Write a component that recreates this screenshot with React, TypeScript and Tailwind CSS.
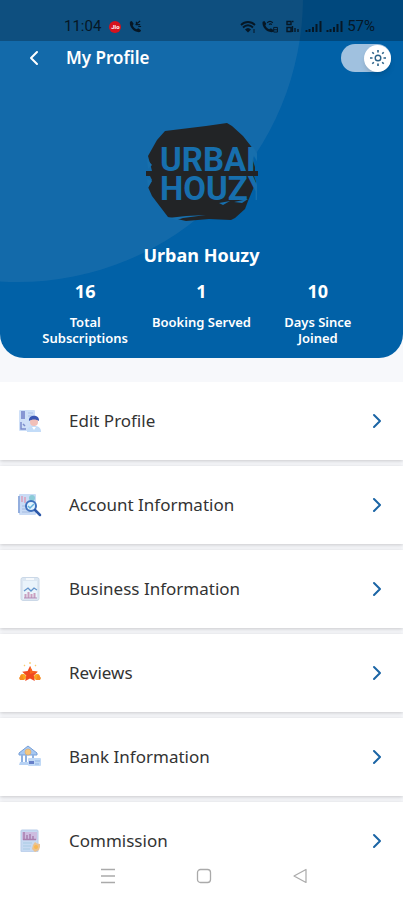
import { useState } from "react";
import type { ReactNode } from "react";
import { ChevronLeft, ChevronRight } from "lucide-react";

const stats = [
  { value: "16", label: "Total Subscriptions" },
  { value: "1", label: "Booking Served" },
  { value: "10", label: "Days Since Joined" },
];

function EditProfileIcon() {
  return (
    <svg viewBox="0 0 24 24" className="size-6" aria-hidden="true">
      <rect x="1" y="1" width="16" height="21" rx="1" fill="#cfe0f8" />
      <rect x="3" y="2" width="4" height="8" fill="#8796d3" />
      <path d="M10 4h5M10 7h4" stroke="#a9bfe8" strokeWidth="1.2" />
      <path d="M3 13v7h5M5 15l2 2" stroke="#7c8ccb" strokeWidth="1.5" fill="none" />
      <path d="M9 23c0-5 3-6 7-6s7 1 7 6z" fill="#c3dcf8" />
      <circle cx="16" cy="13" r="4" fill="#f1bfb8" />
      <path d="M11 12c-1-7 11-7 10 0-3-2-7-2-10 0z" fill="#3c58b4" />
      <path d="M14 18l2 3 2-3" fill="#fff" />
    </svg>
  );
}

function AccountIcon() {
  return (
    <svg viewBox="0 0 24 24" className="size-6" aria-hidden="true">
      <rect x="1" y="1" width="17" height="21" rx="1" fill="#c9dbf5" />
      <path d="M1 3v17" stroke="#93aede" strokeWidth="2" />
      <path d="M4 3v6M7 4v6" stroke="#dc9fb9" strokeWidth="1.5" />
      <circle cx="14" cy="5" r="3" fill="#8bcbd8" />
      <path d="M4 13h4M4 16h5M4 19h8" stroke="#a5badf" strokeWidth="1" />
      <circle cx="13" cy="13" r="5" fill="#e2f4ff" stroke="#3d70bd" strokeWidth="2" />
      <path d="M10 13l2 2 4-4" stroke="#65b0dc" strokeWidth="1.5" fill="none" />
      <path d="M17 17l5 5" stroke="#2c58a9" strokeWidth="2.5" strokeLinecap="round" />
    </svg>
  );
}

function BusinessIcon() {
  return (
    <svg viewBox="0 0 24 24" className="size-6" aria-hidden="true">
      <rect x="3" y="0.5" width="18" height="23" rx="2" fill="#dce7f2" stroke="#cbd8e7" />
      <rect x="5" y="4" width="14" height="18" fill="#e9f3fb" />
      <path d="M8 2h8" stroke="#fff" strokeWidth="1.5" />
      <path d="M6 14l4-3 3 3 3-3 3 2" stroke="#6495cc" strokeWidth="1.3" fill="none" />
      <path d="M7.5 21v-4M10.500 21v-6M13.500 21v-4M16.500 21v-5" stroke="#c99fbf" strokeWidth="2" />
      <path d="M6 21h13" stroke="#ae88b5" />
    </svg>
  );
}

function ReviewsIcon() {
  return (
    <svg viewBox="0 0 24 24" className="size-6" aria-hidden="true">
      <circle cx="5" cy="16" r="3" fill="#fba51d" />
      <circle cx="19" cy="16" r="3" fill="#fba51d" />
      <path d="M1 17l3-4 2 6H2zM23 17l-3-4-2 6h4z" fill="#f68b20" />
      <path d="M12 5l2.400 5 5.400.8-4 3.800 1 5.400-4.800-2.500L7.200 20l1-5.400-4-3.800 5.400-.8z" fill="#f1491f" />
      <path d="M12 5l2.400 5 5.400.8-7.800 2.200z" fill="#f9661f" />
      <path d="M12 1v2M6 4l1 1M18 4l-1 1" stroke="#f7cf70" strokeWidth="1.3" />
    </svg>
  );
}

function BankIcon() {
  return (
    <svg viewBox="0 0 24 24" className="size-6" aria-hidden="true">
      <path d="M1 8l9-7 9 7v2H1z" fill="#a6c8f2" stroke="#779fd7" />
      <path d="M4 10v7M8 10v7M15 10v5" stroke="#8fb1e1" strokeWidth="2" />
      <path d="M2 17h9v3H1z" fill="#b7d2f4" />
      <circle cx="10" cy="7" r="3" fill="#f4c880" stroke="#d9a86c" strokeWidth="0.600" />
      <rect x="10" y="13" width="13" height="8" rx="1" fill="#c0d9f6" />
      <path d="M11 16h5v3h-5z" fill="#667fc8" />
      <path d="M17 16h5M17 19h4" stroke="#91b5e5" />
    </svg>
  );
}

function CommissionIcon() {
  return (
    <svg viewBox="0 0 24 24" className="size-6" aria-hidden="true">
      <rect x="3" y="1" width="17" height="22" rx="1" fill="#c7daf2" stroke="#b9cce8" />
      <rect x="4" y="3" width="15" height="8" fill="#cdbce0" />
      <path d="M6 3v7M9 6v4M12 5v5M15 7v3M5 10.500h13" stroke="#a87fae" strokeWidth="1.500" />
      <path d="M5 14h9M5 17h8M5 20h7" stroke="#a8cbe3" />
      <path d="M17 13l2 1.500 3 .5v3l-1 3-4 2-3-3 1-4z" fill="#ecc28e" />
      <circle cx="18" cy="18" r="2" fill="#f8b750" />
    </svg>
  );
}

const menu: { label: string; icon: ReactNode }[] = [
  { label: "Edit Profile", icon: <EditProfileIcon /> },
  { label: "Account Information", icon: <AccountIcon /> },
  { label: "Business Information", icon: <BusinessIcon /> },
  { label: "Reviews", icon: <ReviewsIcon /> },
  { label: "Bank Information", icon: <BankIcon /> },
  { label: "Commission", icon: <CommissionIcon /> },
];

const handset =
  "M1 2l2-1 2 3-1 2c1 2 2 3 4 4l2-1 3 2-1 2c-6 1-12-5-11-11z";

function SignalBars() {
  return (
    <svg viewBox="0 0 17 13" className="h-[13px] w-[17px]" aria-hidden="true">
      <path d="M1.500 12v-2M4.500 12v-3M8 12V7M11.500 12V4M15.500 12V1" stroke="currentColor" strokeWidth="2" />
    </svg>
  );
}

function StatusBar() {
  return (
    <div className="flex h-[41px] items-center justify-between bg-black/25 pt-3 pl-16 pr-7 font-['Roboto',sans-serif] text-[15px] text-[#061725]">
      <div className="flex items-center gap-2">
        <span>11:04</span>
        <span className="flex size-3 items-center justify-center rounded-full bg-[#d5121d] text-[6px] font-bold text-white">
          Jio
        </span>
        <svg viewBox="0 0 14 14" className="size-[13px]" aria-hidden="true">
          <path d={handset} fill="currentColor" />
          <path d="M7 5l5-4M8 2v3h4M10 7h3" stroke="currentColor" strokeWidth="1.300" fill="none" />
        </svg>
      </div>
      <div className="flex items-center gap-1">
        <svg viewBox="0 0 17 13" className="h-[13px] w-[17px]" aria-hidden="true">
          <path d="M1 5c4-4 10-4 14 0M3 7.500c3-3 7-3 10 0" stroke="currentColor" strokeWidth="1.800" fill="none" />
          <path d="M5 9.500c2-2 4-2 6 0l-3 3z" fill="currentColor" />
          <path d="M14 9v4" stroke="currentColor" />
        </svg>
        <svg viewBox="0 0 18 14" className="h-[13px] w-[18px]" aria-hidden="true">
          <path d={handset} fill="currentColor" />
          <path d="M6 3c2-2 4-2 6 0M8 5c1-1 2-1 3 0" stroke="currentColor" strokeWidth="1.300" fill="none" />
          <path d="M13 8h4v5h-4zM13 10.500h4" stroke="currentColor" fill="none" />
        </svg>
        <svg viewBox="0 0 14 13" className="mx-0.5 h-[13px] w-[14px]" aria-hidden="true">
          <path d="M2 1.500h4v3H2zM2 7.500h4v4H2zM7 1.500h1.500M10 12V8M13 12V9M7.500 12V6" stroke="currentColor" strokeWidth="1.400" fill="none" />
        </svg>
        <SignalBars />
        <SignalBars />
        <span>57%</span>
      </div>
    </div>
  );
}

function Logo() {
  return (
    <svg viewBox="0 0 112 98" className="h-[98px] w-28" role="img" aria-label="Urban Houzy">
      <defs>
        <clipPath id="badge">
          <path d="M0 0h104l7 27v58H0z" />
        </clipPath>
      </defs>
      <path
        d="M19 8l41-5 21-3 5 3 11 10 11 14-3 5 4 12v4h3v5h-4l2 6-8 19-3 8-10 9-4 2-22-1-23 2-18-4L6 73l-4-9 4-7-2-4H0v-5h6l-1-4-3-11 9-16z"
        fill="#222426"
      />
      <g
        clipPath="url(#badge)"
        fill="#176fad"
        fontFamily="Roboto, sans-serif"
        fontSize="33"
        fontWeight="700"
      >
        <text x="14" y="48">URBAN</text>
        <text x="14" y="77">HOUZY</text>
      </g>
      <path d="M1 36l5 6-4 4zM1 56l5 2-4 7z" fill="#176fad" />
      <path d="M73 80l11-2-7 4zM88 79l14-3-6 4zM22 95l18-2 20-1-23 3-6 2z" fill="#176fad" />
    </svg>
  );
}

function ThemeSwitch() {
  const [light, setLight] = useState(true);

  return (
    <button
      type="button"
      role="switch"
      aria-checked={light}
      aria-label="Light theme"
      onClick={() => setLight(!light)}
      className={`flex h-7 w-[50px] items-center rounded-full bg-[#a0c1df] ${light ? "justify-end" : "justify-start"}`}
    >
      <span className="flex size-[27px] items-center justify-center rounded-full bg-white shadow-md">
        <svg viewBox="0 0 18 18" className="size-[18px]" fill="none" stroke="#2a6188" aria-hidden="true">
          <circle cx="9" cy="9" r="2.800" strokeWidth="1.400" />
          <path
            d="M9 1v2.500M9 14.500V17M1 9h2.500M14.500 9H17M3.300 3.300l1.500 1.500M13.200 13.200l1.500 1.500M3.300 14.700l1.500-1.500M13.200 4.800l1.500-1.500"
            strokeWidth="1.600"
          />
        </svg>
      </span>
    </button>
  );
}

function ProfileHeader() {
  return (
    <header className="relative shrink-0 overflow-hidden rounded-b-3xl bg-[#0161a7] pb-3 text-white">
      <div className="absolute -top-[288px] -left-[267px] size-[570px] rounded-full bg-[#136aaa]" />
      <div className="relative">
        <StatusBar />
        <div className="flex h-[34px] items-center pr-3 pl-[22px]">
          <button type="button" aria-label="Back" className="mr-5">
            <ChevronLeft size={24} strokeWidth={2} />
          </button>
          <h1 className="flex-1 text-[17px] font-semibold">My Profile</h1>
          <ThemeSwitch />
        </div>
        <div className="mt-12 flex flex-col items-center">
          <Logo />
          <h2 className="mt-5 text-lg font-bold">Urban Houzy</h2>
        </div>
        <dl className="mt-2.5 grid grid-cols-3 px-[27px] text-center">
          {stats.map((stat) => (
            <div key={stat.label} className="flex flex-col-reverse justify-end gap-[11px] px-2">
              <dt className="text-[13px] leading-4 font-semibold">{stat.label}</dt>
              <dd className="text-lg leading-6 font-bold">{stat.value}</dd>
            </div>
          ))}
        </dl>
      </div>
    </header>
  );
}

function BottomNav() {
  return (
    <nav className="flex h-12 shrink-0 items-center justify-around bg-white pr-[55px] pl-[60px] text-[#aaaaaa]">
      <button type="button" aria-label="Recent apps">
        <svg viewBox="0 0 16 16" className="size-4" stroke="currentColor">
          <path d="M1 1.500h14M1 8h14M1 14.500h14" strokeWidth="1.300" />
        </svg>
      </button>
      <button type="button" aria-label="Home">
        <svg viewBox="0 0 16 16" className="size-4" fill="none" stroke="currentColor">
          <rect x="1.500" y="1.500" width="13" height="13" rx="3" strokeWidth="1.300" />
        </svg>
      </button>
      <button type="button" aria-label="Back to previous app">
        <svg viewBox="0 0 16 16" className="size-4" fill="none" stroke="currentColor">
          <path d="M14 1.500v13L2 8z" strokeWidth="1.200" strokeLinejoin="round" />
        </svg>
      </button>
    </nav>
  );
}

export default function App() {
  return (
    <div className="flex h-screen flex-col bg-[#f7f8fb] font-['Noto_Sans',sans-serif]">
      <ProfileHeader />
      <main className="mt-6 min-h-0 flex-1 overflow-y-auto [scrollbar-width:none]">
        <ul className="flex flex-col gap-1.5">
          {menu.map((item) => (
            <li key={item.label} className="bg-white shadow-[0_1px_4px_rgba(0,0,0,0.2)]">
              <a href="#" className="flex h-[78px] items-center pr-3.5 pl-[18px]">
                {item.icon}
                <span className="ml-[27px] flex-1 text-[17px] text-[#333333]">{item.label}</span>
                <ChevronRight size={24} strokeWidth={2} className="text-[#1b65a5]" />
              </a>
            </li>
          ))}
        </ul>
      </main>
      <BottomNav />
    </div>
  );
}
